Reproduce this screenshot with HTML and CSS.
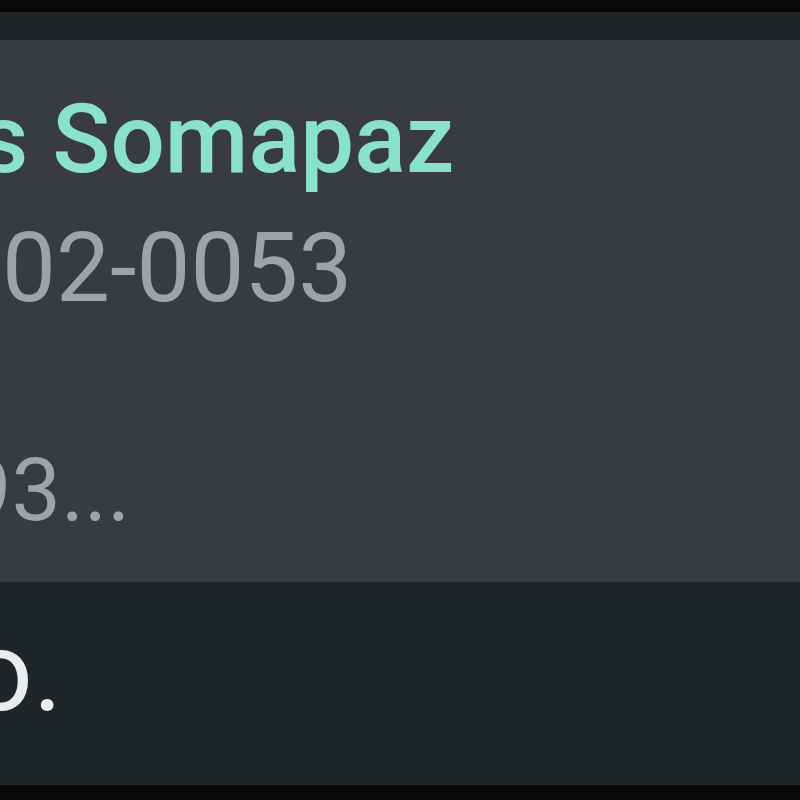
FILE: index.html
```html
<!DOCTYPE html>
<html lang="pt">
<head>
<meta charset="utf-8">
<title>Mensagem</title>
<link rel="stylesheet" href="styles.css">
</head>
<body>
<div class="wallpaper-top"></div>
<div class="bubble">
  <div class="quote">
    <div class="quote-name">s Somapaz</div>
    <div class="quote-phone">02-0053</div>
    <div class="quote-text">93...</div>
  </div>
  <div class="message">o.</div>
</div>
<div class="wallpaper-bottom"></div>
</body>
</html>
```

FILE: styles.css
```css
html, body {
  margin: 0;
  padding: 0;
  background: #08080b;
  overflow: hidden;
  width: 800px;
  height: 800px;
}

body {
  font-family: Roboto, "Noto Sans", sans-serif;
}

.wallpaper-top {
  height: 12px;
  background: #09090c;
}

.bubble {
  background: #1f2628;
  padding-top: 28px;
}

.quote {
  background: #383c3f;
  height: 499px;
  padding-top: 43px;
  overflow: hidden;
  white-space: nowrap;
}

.quote-name {
  font-size: 96px;
  line-height: normal;
  font-weight: 500;
  color: #8ae2cd;
  margin-left: -21px;
}

.quote-phone {
  font-size: 96px;
  line-height: normal;
  color: #9ea3a6;
  margin-top: 17px;
  margin-left: 2px;
}

.quote-text {
  font-size: 88px;
  line-height: normal;
  color: #9ea3a6;
  margin-top: 114px;
  margin-left: -38px;
}

.message {
  height: 179px;
  padding-top: 24px;
  font-size: 112px;
  line-height: normal;
  color: #e9edef;
  margin-left: -31px;
  overflow: hidden;
}

.wallpaper-bottom {
  height: 15px;
  background: #09090c;
}
```
